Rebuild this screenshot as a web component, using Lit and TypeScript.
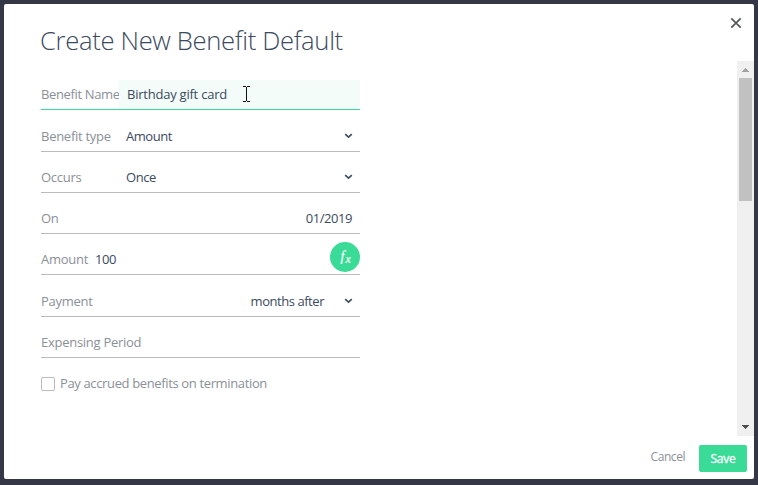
import { LitElement, html, css, svg, nothing } from "lit";
import { customElement, property } from "lit/decorators.js";

@customElement("field-row")
class FieldRow extends LitElement {
  @property() label = "";
  @property() value = "";
  @property({ type: Boolean }) select = false;

  static styles = css`
    :host {
      display: flex;
      box-sizing: border-box;
      height: 41px;
      align-items: flex-end;
      border-bottom: 1px solid #b9bbbe;
      font-size: 13px;
      color: #8b9097;
      white-space: nowrap;
    }
    :host(.tall) { height: 42px; }
    :host(.active) { height: 30px; border-bottom-color: #3adb97; }
    .label {
      flex: none;
      line-height: 29px;
      letter-spacing: -0.27px;
    }
    .value {
      flex: 1;
      min-width: 0;
      line-height: 29px;
      color: #3b4a5e;
      padding-left: 7px;
      letter-spacing: -0.45px;
    }
    :host(.fixed) .label { width: 78px; }
    :host(.active) .label { letter-spacing: -0.36px; }
    :host(.active) .value { background: #f3fcf9; padding-left: 8px; letter-spacing: -0.23px; }
    :host(.end) .value { text-align: right; padding-right: 8px; }
    :host(.months) .value { padding-right: 20px; }
    .chevron { flex: none; width: 9px; height: 6px; margin: 0 7px 12px 0; }
  `;

  render() {
    return html`
      <span class="label">${this.label}</span>
      <span class="value">${this.value}</span>
      ${this.select
        ? html`<svg class="chevron" viewBox="0 0 9 6">
            <path d="M1.2 1.2 4.5 4.2 7.8 1.2" fill="none" stroke="#3f4e63" stroke-width="1.7" />
          </svg>`
        : nothing}
      <slot></slot>
    `;
  }
}

@customElement("app-root")
class AppRoot extends LitElement {
  static styles = css`
    :host {
      display: block;
      box-sizing: border-box;
      width: 758px;
      height: 485px;
      padding: 4px 4px 6px;
      background: #363746;
      font-family: "Open Sans", "Noto Sans", sans-serif;
    }
    .dialog {
      position: relative;
      box-sizing: border-box;
      height: 475px;
      background: #fff;
      border-radius: 2px;
      display: flex;
      flex-direction: column;
      overflow: hidden;
    }
    header {
      flex: none;
      height: 57px;
      display: flex;
      justify-content: space-between;
      padding: 0 12px 0 36px;
    }
    h1 {
      margin: 0;
      font-size: 25.6px;
      font-weight: 300;
      line-height: 73px;
      color: #3b4a5e;
      white-space: nowrap;
      letter-spacing: -0.32px;
    }
    .close { width: 12px; height: 12px; margin-top: 13px; }
    .body { flex: none; height: 375px; display: flex; justify-content: space-between; }
    .form { width: 320px; margin: 19px 0 0 36px; padding-left: 1px; box-sizing: border-box; }
    .check {
      display: flex;
      align-items: center;
      gap: 5px;
      margin-top: 16px;
      height: 20px;
      font-size: 13px;
      line-height: 18px;
      color: #8b9097;
      white-space: nowrap;
      letter-spacing: -0.36px;
    }
    .check span:last-child { padding-bottom: 2px; }
    .box {
      box-sizing: border-box;
      width: 14px;
      height: 14px;
      border: 1px solid #b9bbbe;
      border-radius: 2px;
    }
    .fx { flex: none; width: 30px; height: 30px; margin-bottom: 2px; }
    .scroll {
      width: 17px;
      background: #f0f0f0;
      display: flex;
      flex-direction: column;
      align-items: center;
    }
    .scroll svg { width: 17px; height: 17px; flex: none; }
    .thumb { width: 13px; height: 123px; background: #c1c1c1; }
    .gap { flex: 1; }
    footer {
      display: flex;
      justify-content: flex-end;
      padding: 9px 7px 0 0;
      font-size: 12px;
      color: #8b9097;
    }
    .cancel { line-height: 24px; margin-right: 14px; letter-spacing: -0.45px; }
    .save {
      width: 48px;
      height: 27px;
      line-height: 27px;
      text-align: center;
      border-radius: 2px;
      background: #3adb97;
      color: #fff;
      letter-spacing: -0.2px;
      -webkit-text-stroke: 0.3px #fff;
    }
    .cursor { position: absolute; left: 239px; top: 82px; width: 7px; height: 16px; }
  `;

  private arrow(up: boolean) {
    return html`<svg viewBox="0 0 17 17" shape-rendering="crispEdges">
      ${up
        ? svg`<path d="M8 7h1v1h1v1h1v1h1v1H5v-1h1V9h1V8h1z" fill="#a3a3a3" />`
        : svg`<path d="M5 6h7v1h-1v1h-1v1H9v1H8V9H7V8H6V7H5z" fill="#505050" />`}
    </svg>`;
  }

  render() {
    return html`
      <div class="dialog">
        <header>
          <h1>Create New Benefit Default</h1>
          <svg class="close" viewBox="0 0 12 12">
            <path d="M1.3 1.3 10.7 10.7M10.7 1.3 1.3 10.7" stroke="#55585d" stroke-width="1.7" />
          </svg>
        </header>
        <div class="body">
          <div class="form">
            <field-row class="fixed active" label="Benefit Name" value="Birthday gift card"></field-row>
            <field-row class="fixed tall" label="Benefit type" value="Amount" select></field-row>
            <field-row class="fixed" label="Occurs" value="Once" select></field-row>
            <field-row class="end" label="On" value="01/2019"></field-row>
            <field-row label="Amount" value="100">
              <svg class="fx" viewBox="0 0 30 30">
                <circle cx="15" cy="15" r="15" fill="#3adb97" />
                <text x="10.5" y="19" fill="#fff" stroke="#fff" stroke-width="0.2" font-family="Liberation Serif, serif" font-style="italic" font-size="14">f</text>
                <text x="15.5" y="20.5" fill="#fff" stroke="#fff" stroke-width="0.2" font-family="Liberation Serif, serif" font-style="italic" font-size="12">x</text>
              </svg>
            </field-row>
            <field-row class="end months tall" label="Payment" value="months after" select></field-row>
            <field-row label="Expensing Period"></field-row>
            <div class="check"><span class="box"></span><span>Pay accrued benefits on termination</span></div>
          </div>
          <div class="scroll">
            ${this.arrow(true)}
            <div class="thumb"></div>
            <div class="gap"></div>
            ${this.arrow(false)}
          </div>
        </div>
        <footer>
          <span class="cancel">Cancel</span>
          <span class="save">Save</span>
        </footer>
        <svg class="cursor" viewBox="0 0 7 16" shape-rendering="crispEdges">
          <path d="M0 0h3v1h1V0h3v1H4v14h3v1H4v-1H3v1H0v-1h3V1H0z" fill="#111" />
        </svg>
      </div>
    `;
  }
}
